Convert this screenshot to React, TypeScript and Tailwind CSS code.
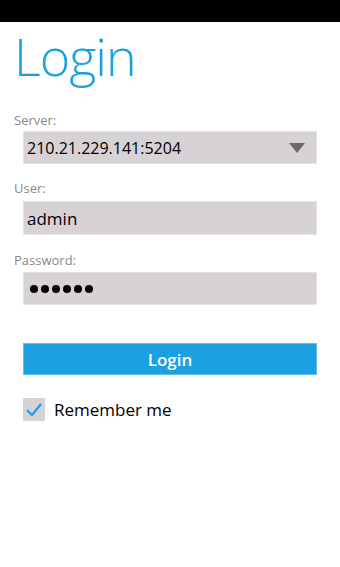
import React from "react";

const ui = { fontFamily: '"Open Sans", "Noto Sans", sans-serif' };

export default function App() {
  return (
    <div className="w-[340px] h-[567px] bg-white flex flex-col overflow-hidden" style={ui}>
      <div className="h-[22px] bg-black shrink-0" />
      <div className="pl-[14px] pt-[2px] h-[86px]">
        <div className="text-[52px] leading-[64px] font-light text-[#1ba1e2] tracking-[-1px]">Login</div>
      </div>
      <div className="flex flex-col">
        <div className="pl-[14px] h-[23px] text-[13px] leading-[18px] text-[#8a8a8a] pt-[3px]">Server:</div>
        <div className="mx-[23px] h-[33px] bg-[#d6d2d6] border border-[#e4e2e4] flex items-center justify-between pl-[3px] pr-[11px]">
          <span className="text-[16px] text-black leading-none">210.21.229.141:5204</span>
          <svg width="16" height="10" viewBox="0 0 16 10">
            <polygon points="0,0 16,0 8,10" fill="#6a6a6a" />
          </svg>
        </div>
        <div className="pl-[14px] h-[37px] text-[13px] leading-[18px] text-[#8a8a8a] pt-[15px]">User:</div>
        <div className="mx-[23px] h-[34px] bg-[#d6d2d6] border border-[#e4e2e4] flex items-center pl-[3px]">
          <span className="text-[17px] text-black leading-none">admin</span>
        </div>
        <div className="pl-[14px] h-[37px] text-[13px] leading-[18px] text-[#8a8a8a] pt-[16px]">Password:</div>
        <div className="mx-[23px] h-[33px] bg-[#d6d2d6] border border-[#e4e2e4] flex items-center pl-[6px] gap-[3px]">
          {[0, 1, 2, 3, 4, 5].map((i) => (
            <span key={i} className="w-[8px] h-[8px] rounded-full bg-black" />
          ))}
        </div>
        <div className="h-[38px]" />
        <button className="mx-[23px] h-[32px] bg-[#1ba1e2] border border-[#5cc0ee] text-white text-[17px] font-semibold leading-none flex items-center justify-center">
          Login
        </button>
        <div className="h-[23px]" />
        <div className="ml-[23px] flex items-center gap-[9px]">
          <div className="w-[22px] h-[23px] bg-[#d6d2d6] flex items-center justify-center">
            <svg width="18" height="16" viewBox="0 0 18 16">
              <polyline points="2,8 7,13 16,2" fill="none" stroke="#1ba1e2" strokeWidth="2.2" />
            </svg>
          </div>
          <span className="text-[17px] text-black leading-none">Remember me</span>
        </div>
      </div>
    </div>
  );
}
